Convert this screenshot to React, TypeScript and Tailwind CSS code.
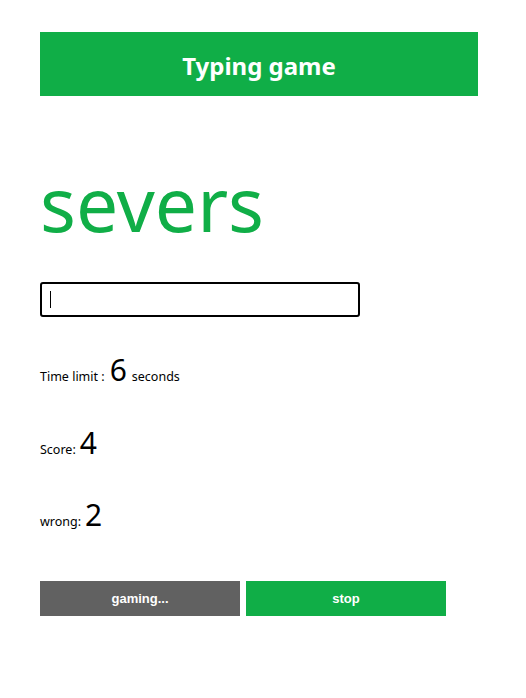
import React from "react";

const App: React.FC = () => {
  return (
    <div className="min-h-[698px] bg-white px-10 pt-8 font-['Noto_Sans',sans-serif] text-black">
      {/* Header */}
      <div className="flex h-16 w-[438px] items-center justify-center bg-[#10ae47] pt-1">
        <h1 className="text-2xl font-bold text-white">Typing game</h1>
      </div>

      {/* Word */}
      <div className="mt-[70px] text-[75px] leading-none text-[#10ae47]">
        severs
      </div>

      {/* Input */}
      <div className="relative mt-[41px] w-[320px]">
        <input
          type="text"
          autoFocus
          className="h-[35px] w-[320px] rounded-[3px] border-2 border-black px-2 text-base outline-none"
        />
        {/* caret */}
        <span className="pointer-events-none absolute left-[10px] top-[9px] h-[17px] w-px bg-black" />
      </div>

      {/* Stats */}
      <div className="mt-[38px] flex items-baseline gap-[5px] text-[12.5px] leading-none">
        <span>Time limit :</span>
        <span className="text-[30px] leading-none">6</span>
        <span>seconds</span>
      </div>
      <div className="mt-[43px] flex items-baseline gap-[4px] text-[12.5px] leading-none">
        <span>Score:</span>
        <span className="text-[30px] leading-none">4</span>
      </div>
      <div className="mt-[42px] flex items-baseline gap-[4px] text-[12.5px] leading-none">
        <span>wrong:</span>
        <span className="text-[30px] leading-none">2</span>
      </div>

      {/* Buttons */}
      <div className="mt-[51px] flex gap-[6px] font-['Liberation_Sans',Arial,sans-serif] text-[13px] font-bold text-white">
        <button className="h-[35px] w-[200px] bg-[#616161]">gaming...</button>
        <button className="h-[35px] w-[200px] bg-[#10ae47]">stop</button>
      </div>
    </div>
  );
};

export default App;
